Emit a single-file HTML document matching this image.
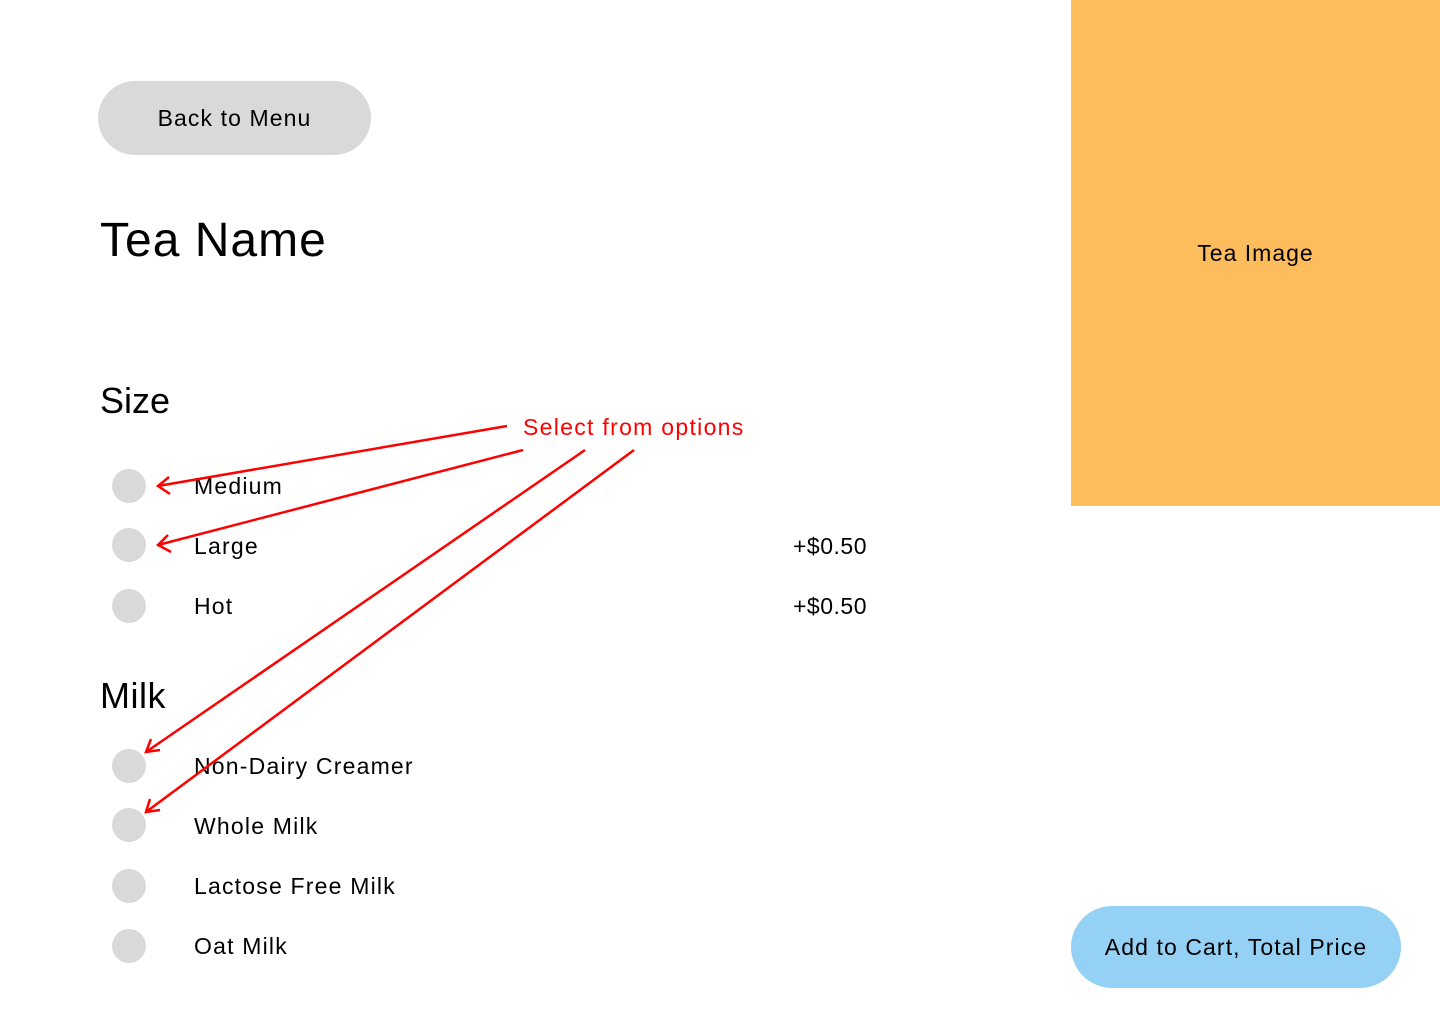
<!DOCTYPE html>
<html><head><meta charset="utf-8"><style>
*{margin:0;padding:0;box-sizing:border-box}
body{width:1440px;height:1024px;background:#fff;position:relative;overflow:hidden;font-family:"Liberation Sans",sans-serif;color:#000}
.a{position:absolute}
.btn{position:absolute;border-radius:41px;display:flex;align-items:center;justify-content:center;font-size:23px;letter-spacing:1.1px}
.r{position:absolute;left:112px;width:34px;height:34px;border-radius:50%;background:#d9d9d9}
.l{position:absolute;left:194px;font-size:23px;line-height:28px;letter-spacing:1.2px}
.p{position:absolute;left:793px;font-size:23px;line-height:28px;letter-spacing:0.5px}
</style></head><body>
<div class="btn" style="left:98px;top:81px;width:273px;height:74px;background:#d9d9d9">Back to Menu</div>
<div class="a" style="left:100px;top:212px;font-size:48px;line-height:58px;letter-spacing:1px">Tea Name</div>
<div class="a" style="left:1071px;top:0;width:369px;height:506px;background:#febd5c;display:flex;align-items:center;justify-content:center;font-size:23px;letter-spacing:1px">Tea Image</div>
<div class="a" style="left:100px;top:379px;font-size:36px;line-height:44px">Size</div>
<div class="r" style="top:469px"></div><div class="l" style="top:472px">Medium</div>
<div class="r" style="top:528px"></div><div class="l" style="top:532px">Large</div><div class="p" style="top:532px">+$0.50</div>
<div class="r" style="top:589px"></div><div class="l" style="top:592px">Hot</div><div class="p" style="top:592px">+$0.50</div>
<div class="a" style="left:100px;top:674px;font-size:36px;line-height:44px;letter-spacing:0.5px">Milk</div>
<div class="r" style="top:749px"></div><div class="l" style="top:752px">Non-Dairy Creamer</div>
<div class="r" style="top:808px"></div><div class="l" style="top:812px">Whole Milk</div>
<div class="r" style="top:869px"></div><div class="l" style="top:872px">Lactose Free Milk</div>
<div class="r" style="top:929px"></div><div class="l" style="top:932px">Oat Milk</div>
<div class="btn" style="left:1071px;top:906px;width:330px;height:82px;background:#94d1f4">Add to Cart, Total Price</div>
<div class="a" style="left:523px;top:413px;font-size:23px;line-height:28px;color:#ff0000;letter-spacing:1.3px">Select from options</div>
<svg class="a" style="left:0;top:0" width="1440" height="1024" fill="none" stroke="#ff0000" stroke-width="2.5">
<line x1="507" y1="426" x2="158" y2="486"/><polyline points="169,477 158,486 170,494"/>
<line x1="523" y1="450" x2="158" y2="545"/><polyline points="168,535 158,545 171,552"/>
<line x1="585" y1="450" x2="146" y2="752"/><polyline points="151,739 146,752 160,750"/>
<line x1="634" y1="450" x2="146" y2="812"/><polyline points="150,799 146,812 160,810"/>
</svg>
</body></html>
